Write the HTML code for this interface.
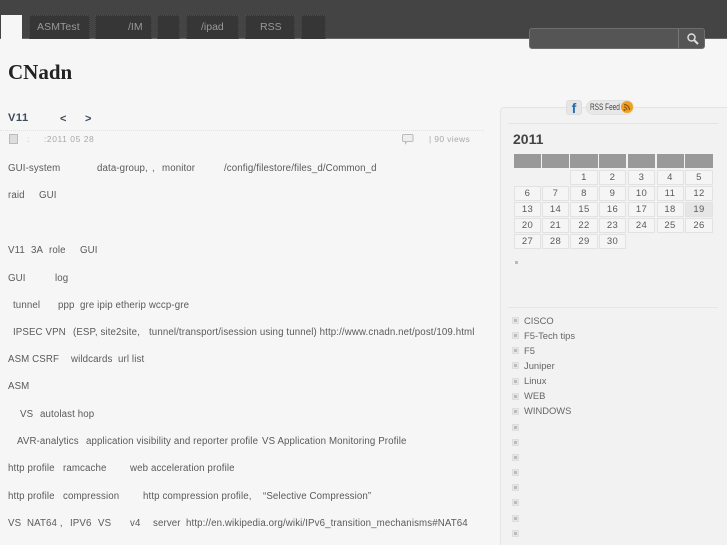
<!DOCTYPE html>
<html>
<head>
<meta charset="utf-8">
<style>
html,body{margin:0;padding:0;background:#f6f6f6;}
#p{position:relative;width:727px;height:545px;overflow:hidden;background:#f6f6f6;font-family:"Liberation Sans",sans-serif;font-size:9.7px;color:#5a5a5a;filter:blur(.3px);}
#p *{box-sizing:border-box;}
.a{position:absolute;white-space:pre;}
.t{position:absolute;white-space:pre;line-height:14px;height:14px;letter-spacing:.12px;margin-top:1px;}
.m{margin-top:0;font-size:8.5px;}
.n{position:absolute;top:15px;height:24px;background:#363636;border:1px dotted #4c4c4c;border-bottom:0;color:#999;font-size:10.5px;line-height:23px;white-space:pre;}
.c{position:absolute;height:15px;border:1px solid #e2e2e2;background:#f5f5f5;text-align:center;line-height:14px;font-size:9.5px;color:#5a5a5a;letter-spacing:.4px;}
.h{position:absolute;top:154px;height:14px;background:#999;}
.b{position:absolute;left:512px;width:7px;height:7px;background:#e6e6e6;border:1px solid #dedede;}
.b:after{content:"";position:absolute;left:1px;top:1px;width:3px;height:3px;background:#bbb;}
.l{position:absolute;left:524px;font-size:9.4px;line-height:14px;height:14px;color:#666;white-space:pre;margin-top:1px;}
</style>
</head>
<body>
<div id="p">
<div class="a" style="left:0;top:0;width:727px;height:39px;background:#444;border-bottom:1px solid #666;"></div>
<div class="a" style="left:1px;top:15px;width:21px;height:24px;background:#f6f6f6;"></div>
<div class="n" style="left:29px;width:61px;padding-left:7px;letter-spacing:.1px;">ASMTest</div>
<div class="n" style="left:95px;width:57px;padding-left:32px;">/IM</div>
<div class="n" style="left:157px;width:23px;"></div>
<div class="n" style="left:186px;width:53px;padding-left:14px;">/ipad</div>
<div class="n" style="left:245px;width:50px;padding-left:14px;">RSS</div>
<div class="n" style="left:301px;width:25px;"></div>

<div class="a" style="left:529px;top:28px;width:176px;height:21px;background:#555;border:1px solid #6e6e6e;border-radius:3px;"></div>
<div class="a" style="left:678px;top:29px;width:1px;height:19px;background:#777;"></div>
<svg class="a" style="left:685px;top:32px;" width="16" height="14" viewBox="0 0 16 14"><circle cx="6.500" cy="5.500" r="3.500" fill="none" stroke="#ddd" stroke-width="1.500"/><path d="M9 8l4 4" stroke="#ddd" stroke-width="2" fill="none"/></svg>

<div class="a" style="left:8px;top:59px;font:bold 21px/26px 'Liberation Serif',serif;color:#222;">CNadn</div>

<div class="a" style="left:8px;top:111px;font:bold 11px/15px 'Liberation Sans',sans-serif;color:#3d4a5c;letter-spacing:.6px;">V11</div>
<div class="a" style="left:60px;top:112px;font:bold 11px/15px 'Liberation Sans',sans-serif;color:#3d4a5c;">&lt;</div>
<div class="a" style="left:85px;top:112px;font:bold 11px/15px 'Liberation Sans',sans-serif;color:#3d4a5c;">&gt;</div>
<div class="a" style="left:0;top:130px;width:484px;border-top:1px dotted #e2e2e2;"></div>
<div class="a" style="left:9px;top:134px;width:9px;height:10px;background:#ddd;border:1px solid #bbb;"></div>
<div class="t m" style="left:27px;top:132px;color:#bbb;letter-spacing:.5px;">:</div>
<div class="t m" style="left:44px;top:132px;color:#aaa;letter-spacing:.55px;">:2011 05 28</div>
<svg class="a" style="left:402px;top:134px;" width="12" height="11" viewBox="0 0 12 11"><path d="M1.500 .5h8.500a1 1 0 0 1 1 1v5a1 1 0 0 1-1 1h-5l-1.500 2v-2h-2a1 1 0 0 1-1-1v-5a1 1 0 0 1 1-1z" fill="#eee" stroke="#bbb"/></svg>
<div class="t m" style="left:429px;top:132px;color:#aaa;letter-spacing:.35px;">| 90 views</div>

<div class="t" style="left:8px;top:161px;">GUI-system</div>
<div class="t" style="left:97px;top:161px;">data-group,</div>
<div class="t" style="left:152px;top:161px;">,</div>
<div class="t" style="left:162px;top:161px;">monitor</div>
<div class="t" style="left:224px;top:161px;">/config/filestore/files_d/Common_d</div>
<div class="t" style="left:8px;top:188px;">raid</div>
<div class="t" style="left:39px;top:188px;">GUI</div>
<div class="t" style="left:8px;top:243px;">V11</div>
<div class="t" style="left:31px;top:243px;">3A</div>
<div class="t" style="left:49px;top:243px;">role</div>
<div class="t" style="left:80px;top:243px;">GUI</div>
<div class="t" style="left:8px;top:271px;">GUI</div>
<div class="t" style="left:55px;top:271px;">log</div>
<div class="t" style="left:13px;top:298px;">tunnel</div>
<div class="t" style="left:58px;top:298px;">ppp</div>
<div class="t" style="left:80px;top:298px;">gre ipip etherip wccp-gre</div>
<div class="t" style="left:13px;top:325px;">IPSEC VPN</div>
<div class="t" style="left:73px;top:325px;">(ESP, site2site,</div>
<div class="t" style="left:149px;top:325px;">tunnel/transport/isession using tunnel) http://www.cnadn.net/post/109.html</div>
<div class="t" style="left:8px;top:352px;">ASM CSRF</div>
<div class="t" style="left:71px;top:352px;">wildcards</div>
<div class="t" style="left:118px;top:352px;">url list</div>
<div class="t" style="left:8px;top:379px;">ASM</div>
<div class="t" style="left:20px;top:407px;">VS</div>
<div class="t" style="left:40px;top:407px;">autolast hop</div>
<div class="t" style="left:17px;top:434px;">AVR-analytics</div>
<div class="t" style="left:86px;top:434px;">application visibility and reporter profile</div>
<div class="t" style="left:262px;top:434px;">VS Application Monitoring Profile</div>
<div class="t" style="left:8px;top:461px;">http profile</div>
<div class="t" style="left:63px;top:461px;">ramcache</div>
<div class="t" style="left:130px;top:461px;">web acceleration profile</div>
<div class="t" style="left:8px;top:489px;">http profile</div>
<div class="t" style="left:63px;top:489px;">compression</div>
<div class="t" style="left:143px;top:489px;">http compression profile,</div>
<div class="t" style="left:263px;top:489px;">“Selective Compression”</div>
<div class="t" style="left:8px;top:516px;">VS</div>
<div class="t" style="left:27px;top:516px;">NAT64 ,</div>
<div class="t" style="left:70px;top:516px;">IPV6</div>
<div class="t" style="left:98px;top:516px;">VS</div>
<div class="t" style="left:130px;top:516px;">v4</div>
<div class="t" style="left:153px;top:516px;">server</div>
<div class="t" style="left:186px;top:516px;">http://en.wikipedia.org/wiki/IPv6_transition_mechanisms#NAT64</div>

<div class="a" style="left:500px;top:107px;width:230px;height:450px;background:#f2f2f2;border:1px solid #e4e4e4;border-radius:4px;"></div>
<div class="a" style="left:508px;top:123px;width:210px;border-top:1px solid #e8e2e2;"></div>
<div class="a" style="left:508px;top:307px;width:210px;border-top:1px solid #e6e6e6;"></div>

<div class="a" style="left:566px;top:100px;width:16px;height:15px;background:#e6e6e6;border:1px solid #ddd;border-radius:3px;color:#1f6fb5;font:bold 14px/14px 'Liberation Sans',sans-serif;text-align:center;">f</div>
<div class="a" style="left:586px;top:100px;width:48px;height:15px;background:#e8e8e8;border:1px solid #e0e0e0;border-radius:8px;"></div>
<div class="a" style="left:590px;top:100px;color:#444;font-size:9px;line-height:14px;transform:scaleX(.72);transform-origin:0 0;">RSS Feed</div>
<div class="a" style="left:621px;top:101px;width:12px;height:12px;background:#f0a020;border-radius:6px;"></div>
<svg class="a" style="left:621px;top:101px;" width="12" height="12" viewBox="0 0 12 12"><circle cx="3.500" cy="9" r="1" fill="#8a5a10"/><path d="M3 6a3 3 0 0 1 3 3M3 3.500a5.500 5.500 0 0 1 5.500 5.500" fill="none" stroke="#8a5a10" stroke-width="1.200"/></svg>

<div class="a" style="left:513px;top:131px;font:bold 14px/16px 'Liberation Sans',sans-serif;color:#444;">2011</div>

<div class="h" style="left:514px;width:27px;"></div>
<div class="h" style="left:542px;width:27px;"></div>
<div class="h" style="left:570px;width:28px;"></div>
<div class="h" style="left:599px;width:27px;"></div>
<div class="h" style="left:628px;width:27px;"></div>
<div class="h" style="left:656.500px;width:27px;"></div>
<div class="h" style="left:685px;width:28px;"></div>

<div class="c" style="left:570px;top:170px;width:28px;">1</div>
<div class="c" style="left:599px;top:170px;width:27px;">2</div>
<div class="c" style="left:628px;top:170px;width:27px;">3</div>
<div class="c" style="left:656.500px;top:170px;width:27px;">4</div>
<div class="c" style="left:685px;top:170px;width:28px;">5</div>

<div class="c" style="left:514px;top:186px;width:27px;">6</div>
<div class="c" style="left:542px;top:186px;width:27px;">7</div>
<div class="c" style="left:570px;top:186px;width:28px;">8</div>
<div class="c" style="left:599px;top:186px;width:27px;">9</div>
<div class="c" style="left:628px;top:186px;width:27px;">10</div>
<div class="c" style="left:656.500px;top:186px;width:27px;">11</div>
<div class="c" style="left:685px;top:186px;width:28px;">12</div>

<div class="c" style="left:514px;top:202px;width:27px;">13</div>
<div class="c" style="left:542px;top:202px;width:27px;">14</div>
<div class="c" style="left:570px;top:202px;width:28px;">15</div>
<div class="c" style="left:599px;top:202px;width:27px;">16</div>
<div class="c" style="left:628px;top:202px;width:27px;">17</div>
<div class="c" style="left:656.500px;top:202px;width:27px;">18</div>
<div class="c" style="left:685px;top:202px;width:28px;background:#e6e6e6;">19</div>

<div class="c" style="left:514px;top:218px;width:27px;">20</div>
<div class="c" style="left:542px;top:218px;width:27px;">21</div>
<div class="c" style="left:570px;top:218px;width:28px;">22</div>
<div class="c" style="left:599px;top:218px;width:27px;">23</div>
<div class="c" style="left:628px;top:218px;width:27px;">24</div>
<div class="c" style="left:656.500px;top:218px;width:27px;">25</div>
<div class="c" style="left:685px;top:218px;width:28px;">26</div>

<div class="c" style="left:514px;top:234px;width:27px;">27</div>
<div class="c" style="left:542px;top:234px;width:27px;">28</div>
<div class="c" style="left:570px;top:234px;width:28px;">29</div>
<div class="c" style="left:599px;top:234px;width:27px;">30</div>

<div class="a" style="left:515px;top:261px;width:3px;height:3px;background:#bbb;"></div>

<div class="b" style="top:317px;"></div><div class="l" style="top:313px;">CISCO</div>
<div class="b" style="top:332px;"></div><div class="l" style="top:328px;">F5-Tech tips</div>
<div class="b" style="top:347px;"></div><div class="l" style="top:343px;">F5</div>
<div class="b" style="top:362px;"></div><div class="l" style="top:358px;">Juniper</div>
<div class="b" style="top:378px;"></div><div class="l" style="top:373px;">Linux</div>
<div class="b" style="top:393px;"></div><div class="l" style="top:388px;">WEB</div>
<div class="b" style="top:408px;"></div><div class="l" style="top:403px;">WINDOWS</div>
<div class="b" style="top:424px;"></div>
<div class="b" style="top:439px;"></div>
<div class="b" style="top:454px;"></div>
<div class="b" style="top:469px;"></div>
<div class="b" style="top:484px;"></div>
<div class="b" style="top:499px;"></div>
<div class="b" style="top:515px;"></div>
<div class="b" style="top:530px;"></div>
</div>
</body>
</html>
